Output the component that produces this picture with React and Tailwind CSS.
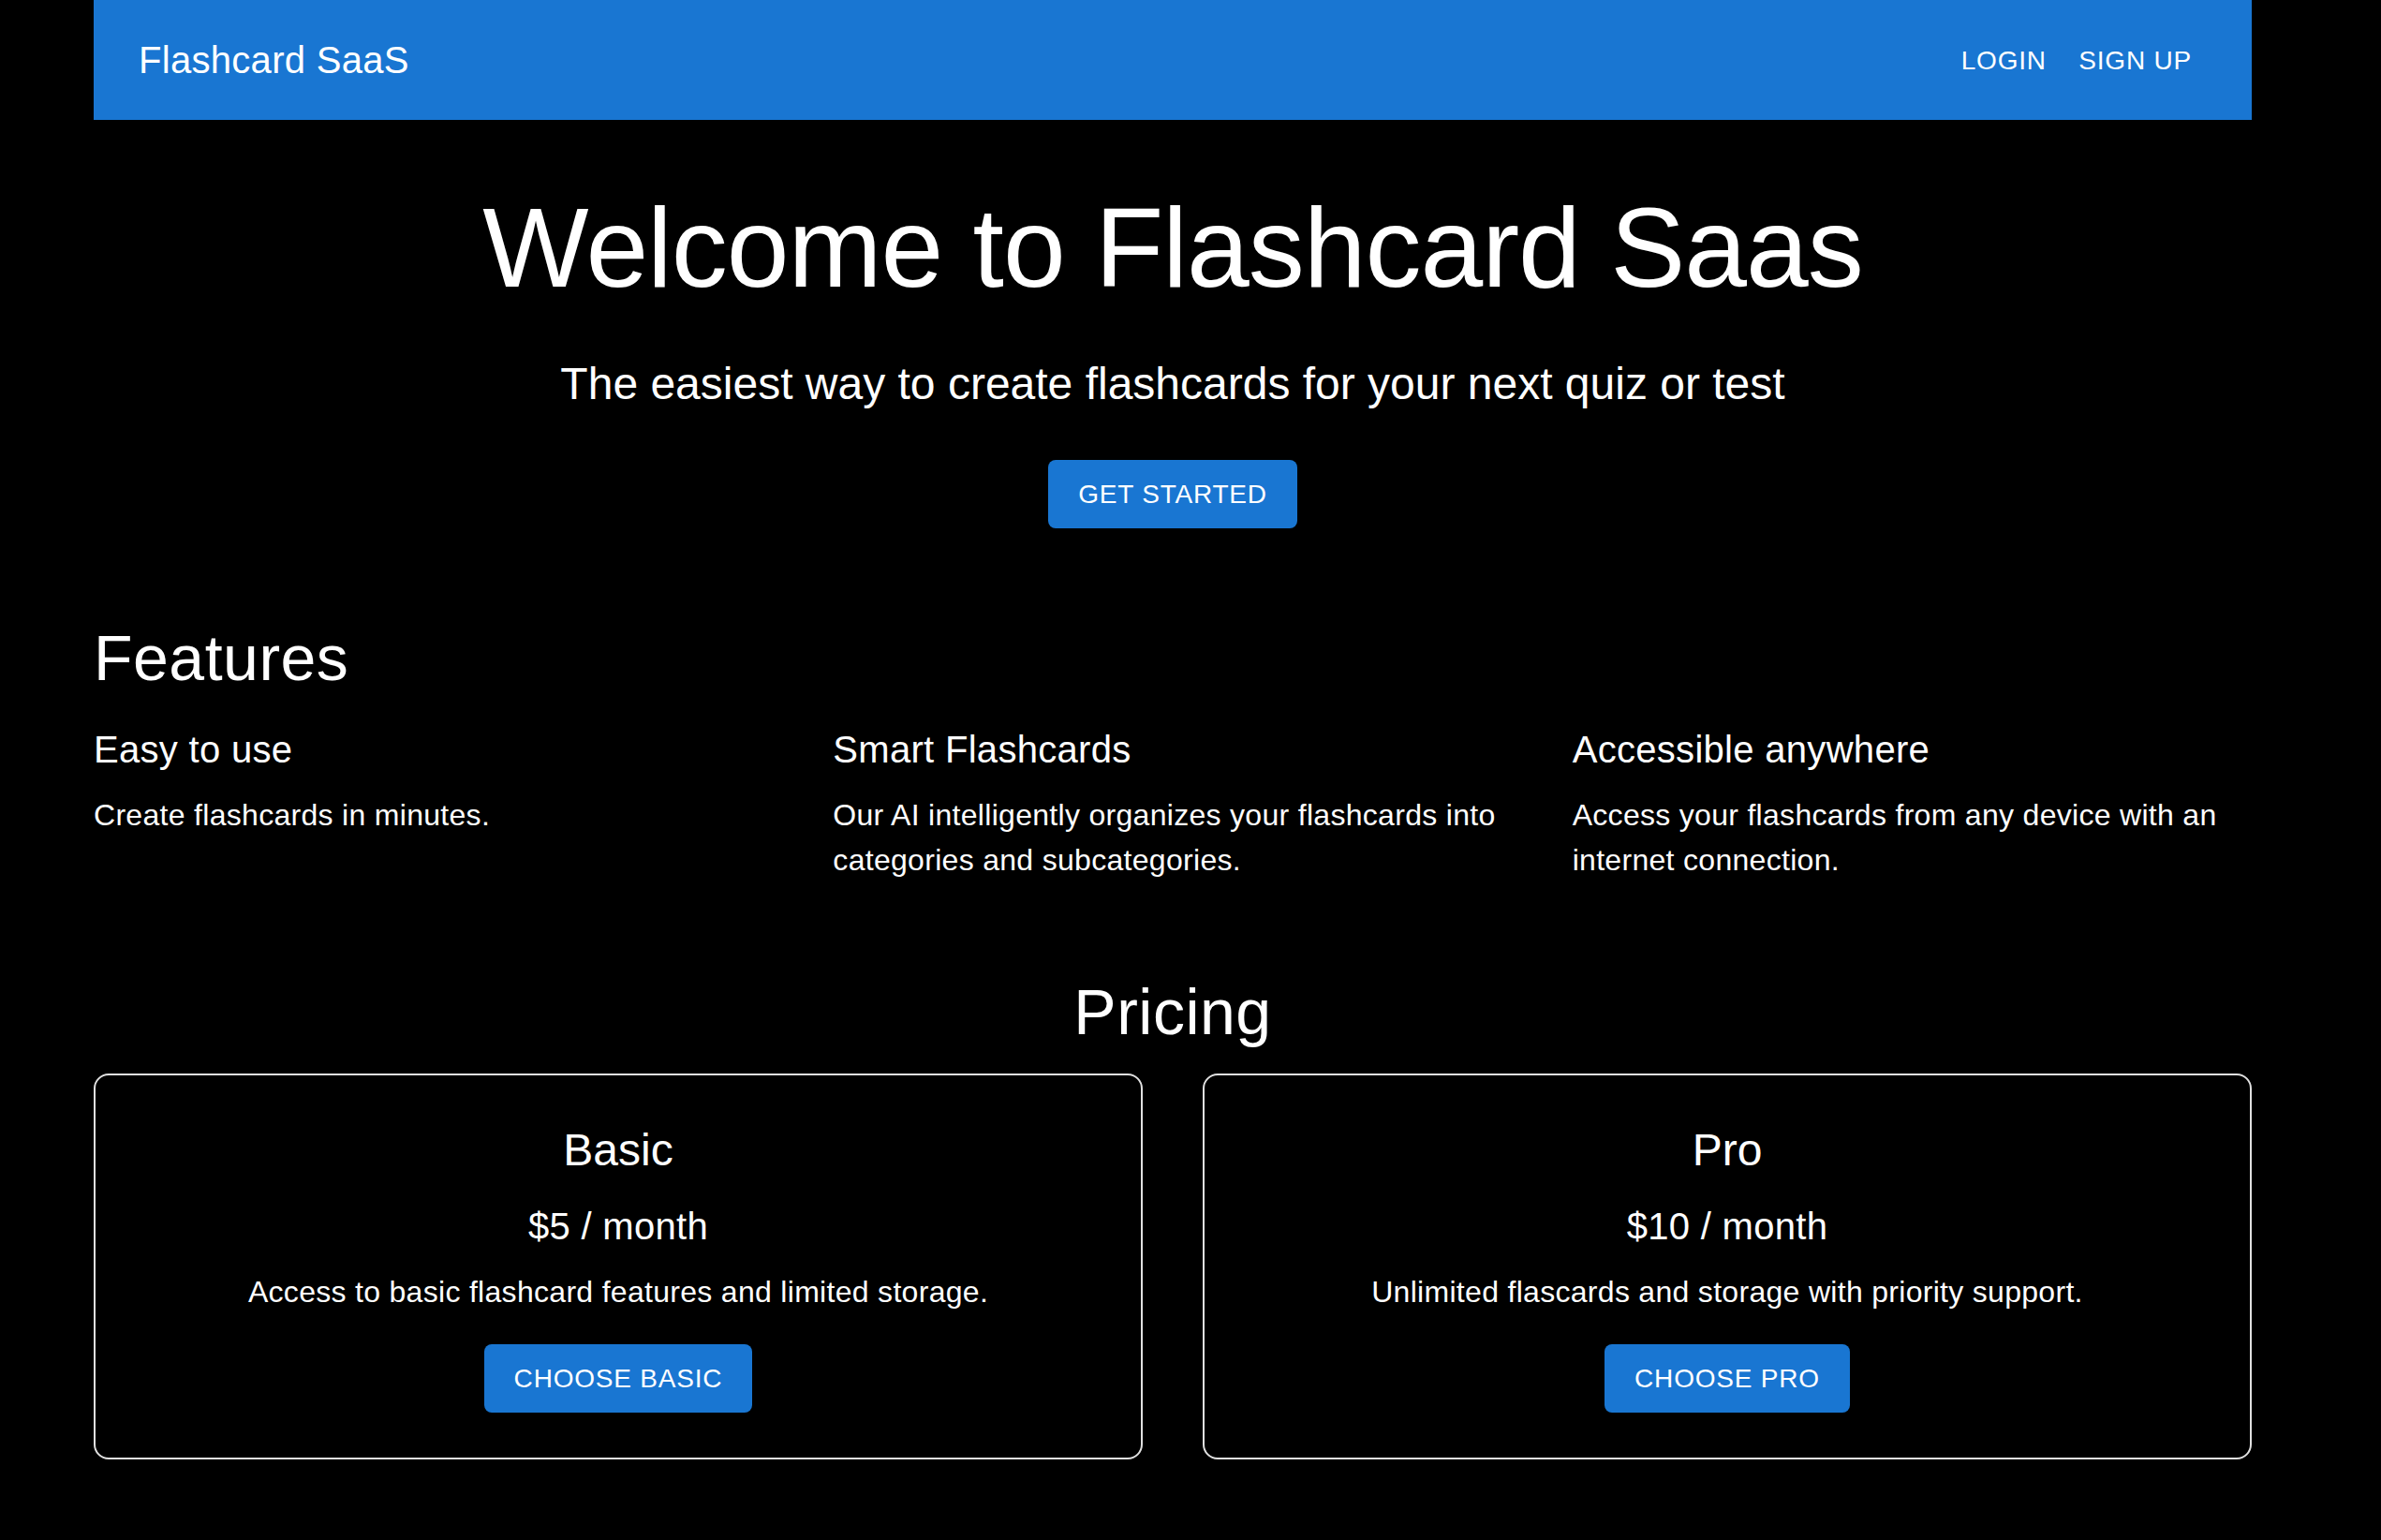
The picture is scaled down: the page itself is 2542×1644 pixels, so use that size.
import React from "react";

const font = { fontFamily: '"Liberation Sans", Arial, Helvetica, sans-serif' };

function Btn({ children, className = "" }) {
  return (
    <button
      className={
        "inline-block bg-[#1976d2] text-white uppercase text-[28px] leading-[49px] tracking-[0.8px] px-[32px] py-[12px] rounded-[8px] font-medium " +
        className
      }
    >
      {children}
    </button>
  );
}

function Feature({ title, text }) {
  return (
    <div>
      <h6 className="text-[40px] leading-[64px] tracking-[0.3px] font-medium mb-[14px]">{title}</h6>
      <p className="text-[32px] leading-[48px] tracking-[0.3px]">{text}</p>
    </div>
  );
}

function Plan({ name, price, desc, cta }) {
  return (
    <div className="border-2 border-[#e0e0e0] rounded-[16px] p-[48px] text-center">
      <h5 className="text-[48px] leading-[64px] mb-[17px]">{name}</h5>
      <h6 className="text-[40px] leading-[64px] tracking-[0.3px] font-medium mb-[14px]">{price}</h6>
      <p className="text-[32px] leading-[48px] tracking-[0.3px]">{desc}</p>
      <Btn className="mt-[32px]">{cta}</Btn>
    </div>
  );
}

export default function App() {
  return (
    <div className="min-h-screen bg-black text-white" style={font}>
      <header className="ml-[100px] w-[2304px] h-[128px] bg-[#1976d2] px-[48px] flex items-center justify-between">
        <div className="text-[40px] leading-[64px] tracking-[0.3px] font-medium">Flashcard SaaS</div>
        <nav className="flex">
          <button className="min-w-[128px] px-[16px] py-[12px] text-[28px] leading-[49px] uppercase tracking-[0.8px] font-medium text-white">
            Login
          </button>
          <button className="min-w-[128px] px-[16px] py-[12px] text-[28px] leading-[49px] uppercase tracking-[0.8px] font-medium text-white">
            Sign Up
          </button>
        </nav>
      </header>

      <main className="ml-[100px] w-[2304px]">
        <section className="pt-[64px] text-center">
          <h2 className="text-[120px] leading-[144px] font-light tracking-[-1px] mb-[42px]">
            Welcome to Flashcard Saas
          </h2>
          <h5 className="text-[48px] leading-[64px] mb-[17px]">
            The easiest way to create flashcards for your next quiz or test
          </h5>
          <Btn className="mt-[32px]">Get Started</Btn>
        </section>

        <section className="mt-[96px]">
          <h4 className="text-[68px] leading-[84px] tracking-[0.5px] mb-[24px]">Features</h4>
          <div className="grid grid-cols-3 gap-x-[64px]">
            <Feature title="Easy to use" text="Create flashcards in minutes." />
            <Feature
              title="Smart Flashcards"
              text="Our AI intelligently organizes your flashcards into categories and subcategories."
            />
            <Feature
              title="Accessible anywhere"
              text="Access your flashcards from any device with an internet connection."
            />
          </div>
        </section>

        <section className="mt-[96px] text-center">
          <h4 className="text-[68px] leading-[84px] tracking-[0.5px] mb-[24px]">Pricing</h4>
          <div className="grid grid-cols-2 gap-x-[64px]">
            <Plan
              name="Basic"
              price="$5 / month"
              desc="Access to basic flashcard features and limited storage."
              cta="Choose Basic"
            />
            <Plan
              name="Pro"
              price="$10 / month"
              desc="Unlimited flascards and storage with priority support."
              cta="Choose Pro"
            />
          </div>
        </section>
      </main>
    </div>
  );
}
